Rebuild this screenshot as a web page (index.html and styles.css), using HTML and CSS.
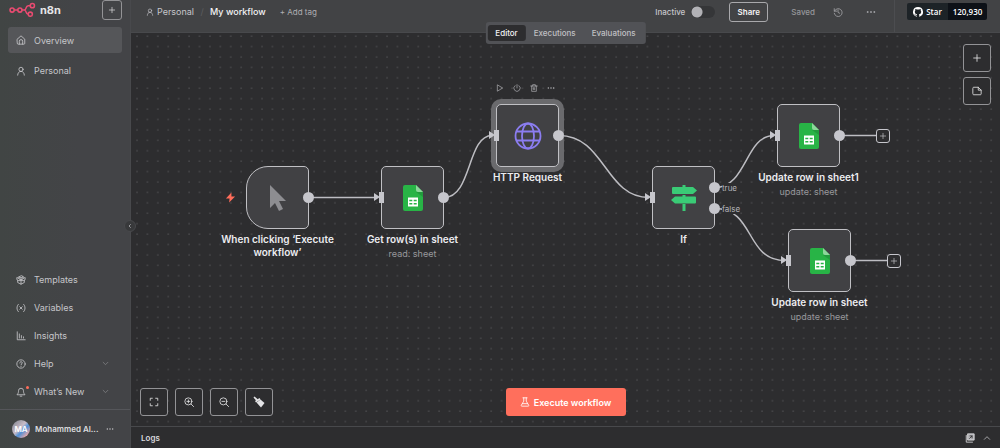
FILE: index.html
```html
<!DOCTYPE html>
<html lang="en">
<head>
    <meta charset="UTF-8">
    <meta name="viewport" content="width=device-width, initial-scale=1.0">
    <title>My workflow - n8n</title>
    <link rel="stylesheet" href="styles.css">
</head>
<body>
    <!-- shared icons -->
    <svg class="sprite" aria-hidden="true">
        <symbol id="i-user" viewBox="0 0 24 24"><circle cx="12" cy="8" r="5"/><path d="M4 22c0-5 3-9 8-9s8 4 8 9"/></symbol>
        <symbol id="i-plus" viewBox="0 0 24 24"><path d="M4 12h16M12 4v16"/></symbol>
        <symbol id="i-down" viewBox="0 0 24 24"><path d="m4 8 8 8 8-8"/></symbol>
        <symbol id="i-dots" viewBox="0 0 24 24"><g fill="currentColor" stroke="none"><circle cx="4" cy="12" r="2.2"/><circle cx="12" cy="12" r="2.2"/><circle cx="20" cy="12" r="2.2"/></g></symbol>
        <symbol id="i-sheet" viewBox="0 0 20 26"><path d="M2 0h11l7 7v17a2 2 0 0 1-2 2H2a2 2 0 0 1-2-2V2a2 2 0 0 1 2-2z" fill="#28b446"/><path d="M13 0l7 7h-5a2 2 0 0 1-2-2z" fill="#8dd69b"/><path d="M13 7h7v5z" fill="#219b3c"/><path d="M5 12.500h10v9H5z" fill="#fff"/><path d="M6.300 15.500h3M10.700 15.500h3M6.300 18.700h3M10.700 18.700h3" stroke="#28b446" stroke-width="1.500"/></symbol>
    </svg>

    <aside class="sidebar">
        <div class="brand">
            <svg class="logo" viewBox="0 0 26 14"><g fill="none" stroke="#ea4b71" stroke-width="1.500"><circle cx="3" cy="7.500" r="2"/><circle cx="10.500" cy="7.500" r="2"/><circle cx="22.500" cy="3.300" r="2"/><circle cx="20.500" cy="11.500" r="2"/><path d="M5 7.500h3.500M12.500 7.500h2c3 0 1-4.200 4-4.200h2M14.500 7.500c3 0 1 4 4 4"/></g></svg>
            <span class="brand-name">n8n</span>
            <button class="square-btn add-btn" aria-label="Add"><svg class="icon"><use href="#i-plus"/></svg></button>
        </div>
        <nav class="menu">
            <a class="item active" href="#"><svg class="icon" viewBox="0 0 24 24"><path d="M3 10l9-8 9 8v10a2 2 0 0 1-2 2H5a2 2 0 0 1-2-2z"/><path d="M8 22v-7a4 4 0 0 1 8 0v7"/></svg>Overview</a>
            <a class="item" href="#"><svg class="icon"><use href="#i-user"/></svg>Personal</a>
        </nav>
        <nav class="menu menu-bottom">
            <a class="item" href="#"><svg class="icon" viewBox="0 0 24 24"><path d="M12 2 7 4.500v5l5 2.500 5-2.500v-5zM7 4.500l5 2.500 5-2.500M12 7v5M7 8 2 6v5l5 3 5-2M17 8l5-2v5l-5 3-5-2M4 13v5l8 4 8-4v-5M12 12v10"/></svg>Templates</a>
            <a class="item" href="#"><svg class="icon" viewBox="0 0 24 24"><path d="M6 3c-5 4-5 14 0 18M18 3c5 4 5 14 0 18M9 9l6 6M15 9l-6 6"/></svg>Variables</a>
            <a class="item" href="#"><svg class="icon" viewBox="0 0 24 24"><path d="M3 2v19h19M8 7v10M13 11v6M18 14v3"/></svg>Insights</a>
            <a class="item" href="#"><svg class="icon" viewBox="0 0 24 24"><circle cx="12" cy="12" r="10"/><path d="M9 9.500c0-4 6-4 6-.500 0 2.500-3 2.500-3 4.500M12 17v1"/></svg>Help<svg class="icon chevron"><use href="#i-down"/></svg></a>
            <a class="item" href="#"><span class="bell"><svg class="icon" viewBox="0 0 24 24"><path d="M3 18c3-3 3-6 3-9a6 6 0 0 1 12 0c0 3 0 6 3 9zM10 22h4"/></svg></span>What’s New<svg class="icon chevron"><use href="#i-down"/></svg></a>
        </nav>
        <div class="account">
            <span class="avatar">MA</span>
            <span class="account-name">Mohammed Al...</span>
            <svg class="icon"><use href="#i-dots"/></svg>
        </div>
        <button class="collapse" aria-label="Collapse sidebar"><svg viewBox="0 0 24 24"><path d="m15 5-7 7 7 7"/></svg></button>
    </aside>

    <main class="main">
        <header class="topbar">
            <a class="crumb" href="#"><svg class="icon small"><use href="#i-user"/></svg>Personal</a>
            <span class="slash">/</span>
            <h1 class="title">My workflow</h1>
            <button class="tag-btn">+ Add tag</button>
            <label class="toggle">Inactive<input type="checkbox" role="switch"></label>
            <button class="share">Share</button>
            <span class="saved">Saved</span>
            <button class="plain history" aria-label="History"><svg class="icon" viewBox="0 0 24 24"><path d="M3 4v6h6M3.500 10a9.500 9.500 0 1 1-.500 5M12 7v6l4 2"/></svg></button>
            <button class="plain" aria-label="More"><svg class="icon"><use href="#i-dots"/></svg></button>
            <div class="github">
                <a class="star" href="#"><svg viewBox="0 0 16 16"><path fill="#fff" d="M8 0a8 8 0 0 0-2.530 15.590c.4.070.550-.170.550-.380v-1.490c-2.230.480-2.700-.950-2.700-.950-.360-.920-.890-1.170-.890-1.170-.730-.500.060-.490.060-.490.800.060 1.230.830 1.230.830.710 1.220 1.870.870 2.330.660.070-.520.280-.870.510-1.070-1.780-.200-3.640-.890-3.640-3.950 0-.870.310-1.590.820-2.150-.080-.200-.360-1.020.080-2.120 0 0 .670-.210 2.200.820a7.600 7.600 0 0 1 4 0c1.530-1.040 2.200-.820 2.200-.820.440 1.100.160 1.920.080 2.120.510.560.820 1.270.820 2.150 0 3.070-1.870 3.750-3.650 3.950.290.250.540.730.540 1.480v2.200c0 .210.150.460.550.380A8 8 0 0 0 8 0z"/></svg>Star</a>
                <a class="count" href="#">120,930</a>
            </div>
        </header>

        <div class="tabs">
            <button class="tab selected">Editor</button>
            <button class="tab">Executions</button>
            <button class="tab">Evaluations</button>
        </div>

        <section class="canvas">
            <svg class="wires">
                <defs>
                    <pattern id="dots" x="5" y="12.500" width="10.417" height="10.417" patternUnits="userSpaceOnUse"><circle cx="1" cy="1" r=".6" fill="#6b6c6f"/></pattern>
                </defs>
                <rect width="100%" height="100%" fill="url(#dots)"/>
                <g fill="none" stroke="#bdbdc2" stroke-width="1.500">
                    <path d="M178 164.500h68"/>
                    <path d="M313 164.500C341 164.500 336 102.500 361 102.500"/>
                    <path d="M428 102.500C474 102.500 474 164.500 518 164.500"/>
                    <path d="M584 154.500C616 154.500 614 102.500 643 102.500"/>
                    <path d="M584 175.500C624 175.500 614 227.500 654 227.500"/>
                    <path d="M709 102.500h36M720 227.500h36"/>
                </g>
            </svg>

            <div class="node trigger" style="left: 115px; top: 133px;">
                <svg class="bolt" viewBox="0 0 24 24"><path fill="#ff6d5a" d="M14 1 2 14h8l-1 9 13-13h-8z"/></svg>
                <svg class="art" viewBox="0 0 28 28"><path fill="#8d8d91" d="M6 1v23l5-5 4 8 4-2-4-8h7z"/></svg>
                <i class="out"></i>
                <div class="caption"><strong>When clicking ‘Execute workflow’</strong></div>
            </div>

            <div class="node" style="left: 250px; top: 133px;">
                <i class="in"></i>
                <svg class="art sheet"><use href="#i-sheet"/></svg>
                <i class="out"></i>
                <div class="caption"><strong>Get row(s) in sheet</strong><small>read: sheet</small></div>
            </div>

            <div class="node picked" style="left: 365px; top: 71px;">
                <div class="tools">
                    <button class="plain" aria-label="Execute step"><svg class="icon" viewBox="0 0 24 24"><path d="M5 3l15 9-15 9z"/></svg></button>
                    <button class="plain" aria-label="Deactivate"><svg class="icon" viewBox="0 0 24 24"><path d="M12 2v10M6 5a9.500 9.500 0 1 0 12 0"/></svg></button>
                    <button class="plain" aria-label="Delete"><svg class="icon" viewBox="0 0 24 24"><path d="M2 6h20M8 6V2h8v4M5 6v16h14V6M10 11v6M14 11v6"/></svg></button>
                    <button class="plain" aria-label="More"><svg class="icon"><use href="#i-dots"/></svg></button>
                </div>
                <i class="in"></i>
                <svg class="art" viewBox="0 0 28 28"><g fill="none" stroke="#8b7df0" stroke-width="1.800"><circle cx="14" cy="14" r="12.500"/><ellipse cx="14" cy="14" rx="6" ry="12.500"/><path d="M2.500 9.500h23M2.500 18.500h23"/></g></svg>
                <i class="out"></i>
                <div class="caption"><strong>HTTP Request</strong></div>
            </div>

            <div class="node branch" style="left: 521px; top: 133px;">
                <i class="in"></i>
                <svg class="art" viewBox="0 0 28 28"><g fill="#3acb76"><path d="M12.500 1h3v3h-3zM12.500 11h3v2h-3zM12.500 20h3v7h-3z"/><path d="M3 3h20l4 3.500-4 3.500H3a1 1 0 0 1-1-1V4a1 1 0 0 1 1-1zM25 12.500H5L1 16l4 3.500h20a1 1 0 0 0 1-1v-5a1 1 0 0 0-1-1z"/></g></svg>
                <div class="outs">
                    <span class="port"><i class="out"></i><span class="port-name">true</span></span>
                    <span class="port"><i class="out"></i><span class="port-name">false</span></span>
                </div>
                <div class="caption"><strong>If</strong></div>
            </div>

            <div class="node" style="left: 646px; top: 71px;">
                <i class="in"></i>
                <svg class="art sheet"><use href="#i-sheet"/></svg>
                <i class="out"></i>
                <button class="next" aria-label="Add node"><svg class="icon"><use href="#i-plus"/></svg></button>
                <div class="caption"><strong>Update row in sheet1</strong><small>update: sheet</small></div>
            </div>

            <div class="node" style="left: 657px; top: 196px;">
                <i class="in"></i>
                <svg class="art sheet"><use href="#i-sheet"/></svg>
                <i class="out"></i>
                <button class="next" aria-label="Add node"><svg class="icon"><use href="#i-plus"/></svg></button>
                <div class="caption"><strong>Update row in sheet</strong><small>update: sheet</small></div>
            </div>

            <div class="side-tools">
                <button class="square-btn" aria-label="Add node"><svg class="icon"><use href="#i-plus"/></svg></button>
                <button class="square-btn" aria-label="Add sticky note"><svg class="icon" viewBox="0 0 24 24"><path d="M2 5a2 2 0 0 1 2-2h11l7 7v9a2 2 0 0 1-2 2H4a2 2 0 0 1-2-2zM15 3v7h7"/></svg></button>
            </div>

            <div class="zoom-tools">
                <button class="square-btn" aria-label="Fit view"><svg class="icon" viewBox="0 0 24 24"><path d="M3 8V3h5M16 3h5v5M21 16v5h-5M8 21H3v-5"/></svg></button>
                <button class="square-btn" aria-label="Zoom in"><svg class="icon" viewBox="0 0 24 24"><circle cx="10.500" cy="10.500" r="8.500"/><path d="M17 17l6 6M10.500 7v7M7 10.500h7"/></svg></button>
                <button class="square-btn" aria-label="Zoom out"><svg class="icon" viewBox="0 0 24 24"><circle cx="10.500" cy="10.500" r="8.500"/><path d="M17 17l6 6M7 10.500h7"/></svg></button>
                <button class="square-btn" aria-label="Tidy up"><svg class="icon broom" viewBox="0 0 24 24"><g fill="currentColor" stroke="none"><path d="M1 3l2-2 7 6-3 3z"/><path d="M4 10l9-6 2 3-9 6z"/><path d="M7 13l8-6 8 7-7 9z"/></g></svg></button>
            </div>

            <button class="execute"><svg class="icon" viewBox="0 0 24 24"><path d="M7 2h10M9 2v8L3 20a1.500 1.500 0 0 0 1 2h16a1.500 1.500 0 0 0 1-2l-6-10V2M6 16h12"/></svg>Execute workflow</button>
        </section>

        <footer class="logs">
            <span>Logs</span>
            <button class="plain pop" aria-label="Pop out"><svg class="icon" viewBox="0 0 24 24"><path d="M7 2h15v15H7z" fill="#b4b4b8"/><path d="M3 6v16h15"/><path d="M11 13l6-6M12 7h5v5" stroke="#2d2d2f"/></svg></button>
            <button class="plain" aria-label="Open logs"><svg class="icon small" viewBox="0 0 24 24"><path d="m4 16 8-8 8 8"/></svg></button>
        </footer>
    </main>
</body>
</html>
```
FILE: styles.css
```css
* {
    box-sizing: border-box;
}
body {
    display: flex;
    height: 100vh;
    margin: 0;
    overflow: hidden;
    font-family: Inter, sans-serif;
    font-size: 9px;
    color: #c6c6ca;
    background: #2d2d2f;
}
a {
    color: inherit;
    text-decoration: none;
}
button {
    display: flex;
    align-items: center;
    justify-content: center;
    padding: 0;
    border: 0;
    background: none;
    color: inherit;
    font: inherit;
}
.sprite {
    position: absolute;
    width: 0;
    height: 0;
}
.icon {
    width: 10px;
    height: 10px;
    flex: none;
    fill: none;
    stroke: currentColor;
    stroke-width: 2;
    stroke-linecap: round;
    stroke-linejoin: round;
}
.icon.small {
    width: 8px;
    height: 8px;
}
.square-btn {
    width: 28px;
    height: 28px;
    border: 1px solid #939396;
    border-radius: 3px;
    background: #2d2d2f;
    color: #e4e4e6;
}

/* sidebar */
.sidebar {
    position: relative;
    z-index: 2;
    display: flex;
    flex-direction: column;
    flex: none;
    width: 131px;
    border-right: 1px solid #48494c;
    background: linear-gradient(90deg, #414544, #434447 60%);
}
.brand {
    display: flex;
    align-items: center;
    height: 19px;
    padding: 0 8px 0 9px;
}
.logo {
    width: 27px;
    height: 15px;
}
.brand-name {
    margin-left: 4px;
    font-size: 11px;
    font-weight: 700;
    color: #e6e6e8;
}
.add-btn {
    width: 20px;
    height: 20px;
    margin-left: auto;
    background: none;
}
.add-btn .icon {
    width: 8px;
    height: 8px;
}
.menu {
    display: flex;
    flex-direction: column;
    gap: 5px;
    padding: 8px 8px 0;
}
.menu-bottom {
    gap: 3px;
    margin-top: auto;
    padding: 0 8px 5px;
}
.item {
    display: flex;
    align-items: center;
    gap: 8px;
    height: 25px;
    padding: 0 13px 0 8px;
    border-radius: 3px;
}
.item.active {
    height: 26px;
    background: #555659;
}
.chevron {
    width: 7px;
    height: 7px;
    margin-left: auto;
    color: #98989b;
}
.bell {
    position: relative;
    display: flex;
}
.bell::after {
    content: "";
    position: absolute;
    top: -1px;
    right: -3px;
    width: 3px;
    height: 3px;
    border-radius: 50%;
    background: #ff6d5a;
}
.account {
    display: flex;
    align-items: center;
    height: 39px;
    padding: 0 16px 0 12px;
    border-top: 1px solid #55565a;
}
.avatar {
    display: flex;
    align-items: center;
    justify-content: center;
    width: 18px;
    height: 18px;
    border-radius: 50%;
    background: linear-gradient(135deg, #8b8d98 10%, #c9bcc8 45%, #4f8fd6 60%, #e9a8a8 85%);
    color: #fff;
    font-size: 8px;
    font-weight: 600;
}
.account-name {
    flex: 1;
    margin-left: 5px;
    font-size: 8px;
    font-weight: 600;
    color: #dcdcdf;
    white-space: nowrap;
}
.account .icon {
    width: 8px;
    height: 8px;
}
.collapse {
    position: absolute;
    top: 220px;
    right: -6px;
    width: 12px;
    height: 12px;
    border: 1px solid #48494c;
    border-radius: 50%;
    background: #38393b;
}
.collapse svg {
    width: 6px;
    height: 6px;
    fill: none;
    stroke: #b4b4b8;
    stroke-width: 3;
}

/* top bar */
.main {
    position: relative;
    display: flex;
    flex: 1;
    flex-direction: column;
    min-width: 0;
}
.topbar {
    display: flex;
    align-items: flex-start;
    height: 33px;
    padding: 0 13px 0 15px;
    border-bottom: 1px solid #48494c;
    background: #424345;
    line-height: 24px;
}
.topbar > * {
    height: 24px;
}
.crumb {
    display: flex;
    align-items: center;
    gap: 3px;
}
.slash {
    width: 16px;
    text-align: center;
    color: #5c5d60;
}
.title {
    margin: 0;
    font-size: 9px;
    font-weight: 500;
    color: #f2f2f4;
}
.tag-btn {
    margin-left: 14px;
    font-size: 8px;
    color: #aeaeb2;
}
.toggle {
    display: flex;
    align-items: center;
    gap: 6px;
    margin-left: auto;
    font-size: 8px;
    font-weight: 500;
}
.toggle input {
    width: 24px;
    height: 12px;
    margin: 0;
    border-radius: 6px;
    appearance: none;
    background: radial-gradient(circle at 6px 6px, #b2b2b6 5px, transparent 6px), #353638;
}
.share {
    width: 39px;
    margin: 2px 23px 0 14px;
    border: 1px solid #a9a9ac;
    border-radius: 3px;
    font-size: 8px;
    font-weight: 600;
    color: #f2f2f4;
}
.topbar .share {
    height: 20px;
}
.saved {
    margin-right: 18px;
    font-size: 8px;
    font-weight: 500;
    color: #96979b;
}
.history {
    margin-right: 23px;
}
.topbar .plain {
    color: #a0a0a4;
}
.topbar .github {
    display: flex;
    height: 32px;
    margin-left: 18px;
    padding: 3px 0 0 12px;
    border-left: 1px solid #4c4d50;
    font-family: "Open Sans", sans-serif;
    font-size: 8px;
    font-weight: 600;
    line-height: 17px;
    color: #fff;
}
.star,
.count {
    display: flex;
    align-items: center;
    justify-content: center;
    gap: 3px;
    height: 17px;
}
.star {
    width: 41px;
    border-radius: 2px 0 0 2px;
    background: #1d2327;
}
.star svg {
    width: 10px;
    height: 10px;
}
.count {
    width: 39px;
    border-radius: 0 2px 2px 0;
    background: #0d1117;
}

/* editor tabs sit over the edge of the top bar */
.tabs {
    position: absolute;
    z-index: 1;
    top: 22px;
    left: 50%;
    display: flex;
    padding: 3px 2px;
    transform: translateX(-50%);
    border-radius: 3px;
    background: #515256;
}
.tab {
    height: 16px;
    padding: 0 8px;
    border-radius: 3px;
    font-size: 8px;
    font-weight: 500;
    color: #c0c0c4;
}
.tab.selected {
    background: #2d2d2f;
    color: #f2f2f4;
}

/* canvas */
.canvas {
    position: relative;
    flex: 1;
    background: #2d2d2f;
}
.wires {
    position: absolute;
    width: 100%;
    height: 100%;
}
.node {
    position: absolute;
    display: flex;
    align-items: center;
    justify-content: center;
    width: 63px;
    height: 63px;
    border: 1px solid #c0c0c4;
    border-radius: 5px;
    background: #414144;
}
.trigger {
    border-radius: 22px 5px 5px 22px;
}
.picked {
    box-shadow: 0 0 0 5px #6a6a6d;
}
.art {
    width: 28px;
    height: 28px;
}
.art.sheet {
    width: 20px;
    height: 26px;
}
.in {
    position: absolute;
    left: -3px;
    width: 5px;
    height: 11px;
    background: #c6c6cc;
}
.in::before {
    content: "";
    position: absolute;
    top: 1px;
    right: 4px;
    border: solid transparent;
    border-width: 4px 0 4px 6px;
    border-left-color: #c6c6cc;
}
.out {
    position: absolute;
    right: -6px;
    width: 11px;
    height: 11px;
    border-radius: 50%;
    background: #c6c6cc;
}
.outs {
    position: absolute;
    top: 15px;
    left: 56px;
    display: flex;
    flex-direction: column;
    gap: 10px;
}
.port {
    display: flex;
    align-items: center;
    height: 11px;
}
.port .out {
    position: static;
}
.port-name {
    margin-left: 2px;
    background: #2d2d2f;
    font-size: 8px;
    line-height: 10px;
    color: #b4b4b8;
}
.caption {
    position: absolute;
    top: 66px;
    left: 50%;
    display: flex;
    flex-direction: column;
    align-items: center;
    width: 130px;
    transform: translateX(-50%);
    text-align: center;
    line-height: 13px;
}
.caption strong {
    font-size: 10px;
    font-weight: 600;
    color: #ececef;
}
.caption small {
    margin-top: 1px;
    font-size: 9px;
    color: #98989c;
}
.bolt {
    position: absolute;
    left: -22px;
    width: 11px;
    height: 11px;
}
.tools {
    position: absolute;
    top: -21px;
    left: -1px;
    display: flex;
    gap: 9px;
    color: #b4b4b8;
}
.tools .icon {
    width: 8px;
    height: 8px;
}
.next {
    position: absolute;
    left: 98px;
    width: 14px;
    height: 14px;
    border: 1px solid #c6c6cc;
    border-radius: 3px;
    background: #2d2d2f;
}
.next .icon {
    width: 8px;
    height: 8px;
}
.side-tools {
    position: absolute;
    top: 11px;
    right: 9px;
    display: flex;
    flex-direction: column;
    gap: 5px;
}
.zoom-tools {
    position: absolute;
    bottom: 10px;
    left: 9px;
    display: flex;
    gap: 7px;
}
.broom {
    width: 12px;
    height: 12px;
}
.execute {
    position: absolute;
    bottom: 10px;
    left: 50%;
    gap: 4px;
    width: 120px;
    height: 28px;
    transform: translateX(-50%);
    border-radius: 3px;
    background: #ff6f5c;
    color: #fff;
    font-size: 9px;
    font-weight: 600;
}

/* logs */
.logs {
    display: flex;
    align-items: center;
    height: 22px;
    padding: 0 9px 0 10px;
    border-top: 1px solid #48494c;
    background: #2d2d2f;
    font-size: 8px;
    font-weight: 600;
    color: #dcdcdf;
}
.pop {
    margin: 0 8px 0 auto;
}
```
